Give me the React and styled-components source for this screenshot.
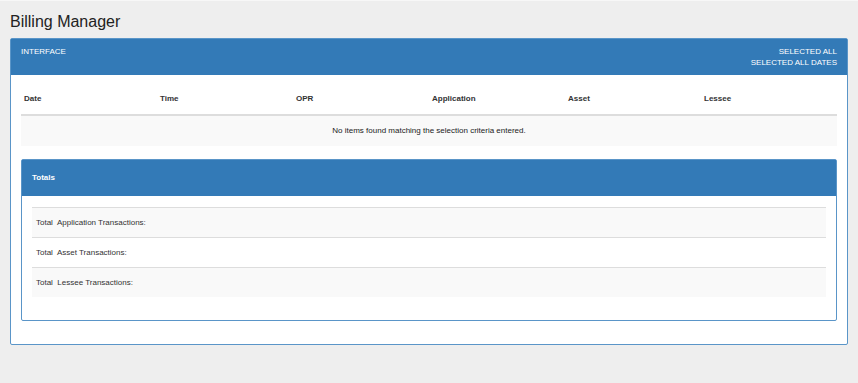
import React from "react";
import styled, { createGlobalStyle } from "styled-components";

const GlobalStyle = createGlobalStyle`
  html, body {
    margin: 0;
    padding: 0;
    background: #eeeeee;
    font-family: "Liberation Sans", Arial, sans-serif;
    color: #333333;
  }
  * { box-sizing: border-box; }
`;

const Page = styled.div`
  min-height: 383px;
  padding: 0 10px 0 10px;
  border-top: 1px solid #f7f7f7;
`;

const Title = styled.h1`
  margin: 11px 0 6px 0;
  font-size: 16px;
  line-height: 20px;
  font-weight: normal;
  color: #222222;
`;

const Panel = styled.section`
  border: 1px solid #5a95c8;
  border-radius: 2px;
  background: #ffffff;
  margin-bottom: ${(p) => (p.$inner ? "13px" : "0")};
  width: ${(p) => (p.$inner ? "auto" : "838px")};
`;

const PanelHeading = styled.header`
  display: flex;
  justify-content: space-between;
  align-items: flex-start;
  background: #337ab7;
  color: #ffffff;
  padding: ${(p) => (p.$tall ? "7px 10px 7px" : "11px 10px")};
  font-size: 8px;
  line-height: ${(p) => (p.$tall ? "11px" : "14px")};
  font-weight: ${(p) => (p.$bold ? "bold" : "normal")};
  text-transform: ${(p) => (p.$tall ? "uppercase" : "none")};
`;

const HeadingRight = styled.div`
  text-align: right;
`;

const PanelBody = styled.div`
  padding: 9px 10px 10px;
`;

const Table = styled.div`
  margin-bottom: 13px;
  font-size: 8px;
  line-height: 14px;
`;

const HeadRow = styled.div`
  display: grid;
  grid-template-columns: repeat(6, 1fr);
  border-bottom: 2px solid #dddddd;
`;

const HeadCell = styled.div`
  padding: 8px 3px;
  font-weight: bold;
  color: #333333;
`;

const EmptyRow = styled.div`
  background: #f9f9f9;
  padding: 8px 3px;
  text-align: center;
  color: #222222;
`;

const TotalsTable = styled.div`
  margin-top: 2px;
  margin-bottom: 13px;
  font-size: 8px;
  line-height: 13px;
`;

const TotalRow = styled.div`
  border-top: 1px solid #dddddd;
  padding: 8px 4px;
  background: ${(p) => (p.$striped ? "#f9f9f9" : "#ffffff")};
  color: #333333;
  white-space: pre;
`;

const columns = ["Date", "Time", "OPR", "Application", "Asset", "Lessee"];
const totals = [
  "Total  Application Transactions:",
  "Total  Asset Transactions:",
  "Total  Lessee Transactions:",
];

export default function App() {
  return (
    <>
      <GlobalStyle />
      <Page>
        <Title>Billing Manager</Title>
        <Panel>
          <PanelHeading $tall>
            <div>Interface</div>
            <HeadingRight>
              <div>Selected All</div>
              <div>Selected All Dates</div>
            </HeadingRight>
          </PanelHeading>
          <PanelBody>
            <Table>
              <HeadRow>
                {columns.map((c) => (
                  <HeadCell key={c}>{c}</HeadCell>
                ))}
              </HeadRow>
              <EmptyRow>No items found matching the selection criteria entered.</EmptyRow>
            </Table>
            <Panel $inner>
              <PanelHeading $bold>
                <div>Totals</div>
              </PanelHeading>
              <PanelBody>
                <TotalsTable>
                  {totals.map((t, i) => (
                    <TotalRow key={t} $striped={i % 2 === 0}>
                      {t}
                    </TotalRow>
                  ))}
                </TotalsTable>
              </PanelBody>
            </Panel>
          </PanelBody>
        </Panel>
      </Page>
    </>
  );
}
